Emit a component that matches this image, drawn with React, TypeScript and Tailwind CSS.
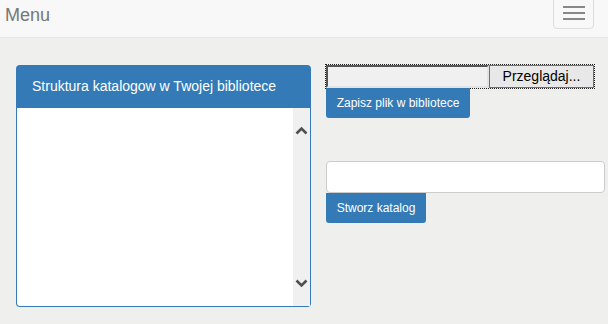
function Chevron({ up }: { up?: boolean }) {
  return (
    <svg width="13" height="9" viewBox="0 0 13 9" className="text-[#505050]">
      <polyline
        points={up ? '1.5,7.5 6.5,2.5 11.5,7.5' : '1.5,1.5 6.5,6.5 11.5,1.5'}
        fill="none"
        stroke="currentColor"
        strokeWidth="2.6"
      />
    </svg>
  );
}

export default function App() {
  return (
    <div className="min-h-[324px] bg-[#efefee] font-['Liberation_Sans',Arial,sans-serif] text-[14px] text-[#333]">
      {/* Navbar */}
      <div className="flex h-[38px] items-start justify-between border-b border-[#e7e7e7] bg-[#f8f8f8] pl-[5px] pr-[14px]">
        <span className="mt-[3px] text-[18px] leading-[24px] text-[#777]">Menu</span>
        <button className="-mt-[10px] flex h-[39px] w-[41px] flex-col items-center justify-end gap-[4px] rounded-[4px] border border-[#ddd] pb-[8px]">
          <span className="block h-[2px] w-[22px] bg-[#888]" />
          <span className="block h-[2px] w-[22px] bg-[#888]" />
          <span className="block h-[2px] w-[22px] bg-[#888]" />
        </button>
      </div>

      <div className="flex gap-[15px] pl-[16px] pt-[27px]">
        {/* Catalog tree panel */}
        <div className="flex w-[295px] flex-col">
          <div className="flex h-[43px] items-center rounded-t-[4px] bg-[#337ab7] pl-[16px] text-[14px] text-white">
            Struktura katalogow w Twojej bibliotece
          </div>
          <div className="flex h-[199px] rounded-b-[4px] border border-t-0 border-[#337ab7] bg-white">
            <div className="flex-1" />
            <div className="flex w-[17px] flex-col items-center justify-between bg-[#f0f0f0] pb-[18px] pt-[18px]">
              <Chevron up />
              <Chevron />
            </div>
          </div>
        </div>

        {/* Right column */}
        <div className="flex flex-1 flex-col items-start">
          <div className="flex h-[23px] w-[268px] outline-1 outline-dotted outline-[#222]">
            <div className="flex-1 border-2 border-b-[#e3e3e3] border-l-[#555] border-r-[#e3e3e3] border-t-[#555] bg-[#f0f0f0]" />
            <div className="flex w-[105px] items-center justify-center border border-[#707070] bg-[#e8e8e8] text-[14px] text-black">
              Przeglądaj...
            </div>
          </div>
          <button className="flex h-[30px] w-[144px] items-center justify-center rounded-b-[3px] bg-[#337ab7] text-[12px] text-white">
            Zapisz plik w bibliotece
          </button>
          <div className="mt-[43px] h-[32px] w-[279px] rounded-[4px] border border-[#ccc] bg-white" />
          <button className="flex h-[30px] w-[100px] items-center justify-center rounded-b-[3px] bg-[#337ab7] text-[12px] text-white">
            Stworz katalog
          </button>
        </div>
      </div>
    </div>
  );
}
